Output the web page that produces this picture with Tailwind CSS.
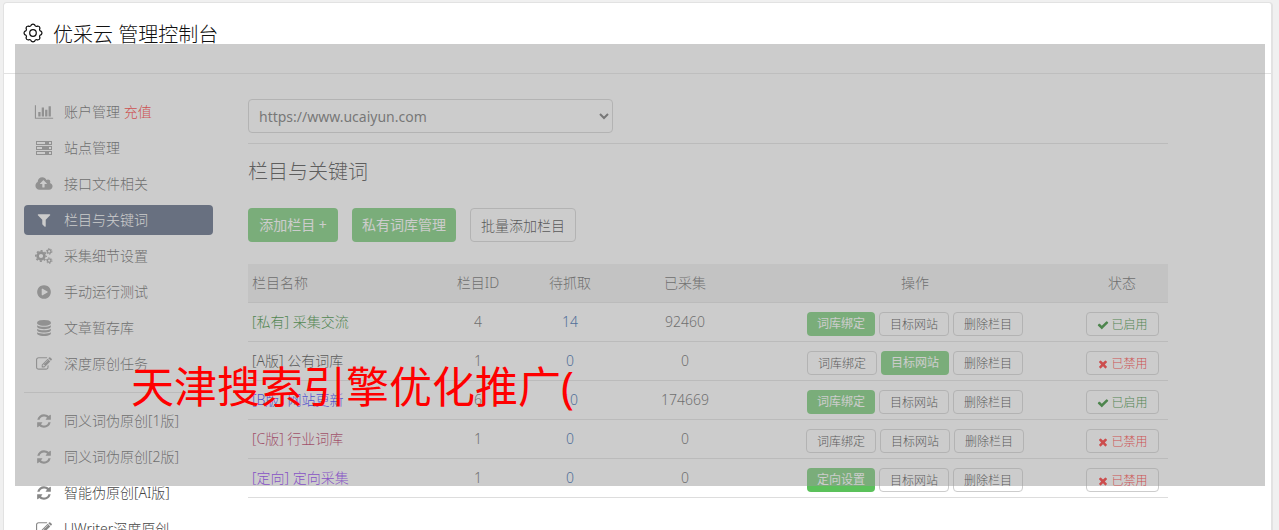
<!DOCTYPE html>
<html lang="zh-CN">
<head>
    <meta charset="UTF-8">
    <meta name="viewport" content="width=device-width, initial-scale=1.0">
    <title>优采云 管理控制台</title>
    <script src="https://cdn.jsdelivr.net/npm/@tailwindcss/browser@4"></script>
</head>
<body class="relative h-screen overflow-hidden bg-[#f0f0f0] font-['Noto_Sans','Noto_Sans_CJK_SC',sans-serif] text-sm font-light text-[#444]">
    <!-- icons -->
    <svg class="hidden">
        <symbol id="i-chart" viewBox="0 0 2048 1792"><path d="M640 896v512h-256v-512h256zm384-512v1024h-256v-1024h256zm1024 1152v128h-2048v-1536h128v1408h1920zm-640-896v768h-256v-768h256zm384-384v1152h-256v-1152h256z"/></symbol>
        <symbol id="i-server" viewBox="0 0 16 14"><path fill-rule="evenodd" d="M0 0h16v4H0zM1 1v2h8v-2zM13 1v2h2v-2zM0 5h16v4H0zM1 6v2h5v-2zM13 6v2h2v-2zM0 10h16v4H0zM1 11v2h8v-2zM13 11v2h2v-2z"/></symbol>
        <symbol id="i-cloud" viewBox="0 0 1920 1792"><path d="M1280 864q0-14-9-23l-352-352q-9-9-23-9t-23 9l-351 351q-10 12-10 24 0 14 9 23t23 9h224v352q0 13 9.500 22.500t22.500 9.500h192q13 0 22.500-9.500t9.500-22.500v-352h224q13 0 22.500-9.500t9.500-22.500zm640 288q0 159-112.500 271.500t-271.500 112.500h-1088q-185 0-316.500-131.500t-131.500-316.500q0-130 70-240t188-165q-2-30-2-43 0-212 150-362t362-150q156 0 285.500 87t188.500 231q71-62 166-62 106 0 181 75t75 181q0 76-41 138 130 31 213.500 135.500t83.500 238.500z"/></symbol>
        <symbol id="i-filter" viewBox="0 0 1792 1792"><path d="M1595 295q17 41-14 70l-493 493v742q0 42-39 59-13 5-25 5-27 0-45-19l-256-256q-19-19-19-45v-486l-493-493q-31-29-14-70 17-39 59-39h1280q42 0 59 39z"/></symbol>
        <symbol id="i-cogs" viewBox="0 0 18 16"><g fill="none" stroke="currentColor"><circle cx="6" cy="8" r="3.400" stroke-width="2.600"/><circle cx="6" cy="8" r="5.200" stroke-width="1.600" stroke-dasharray="2.040 2.040" stroke-dashoffset="1.020"/><circle cx="14.200" cy="3.400" r="1.800" stroke-width="1.300"/><circle cx="14.200" cy="3.400" r="2.800" stroke-width="1" stroke-dasharray="1.460 1.460"/><circle cx="14.200" cy="12.600" r="1.800" stroke-width="1.300"/><circle cx="14.200" cy="12.600" r="2.800" stroke-width="1" stroke-dasharray="1.460 1.460"/></g></symbol>
        <symbol id="i-play" viewBox="0 0 1792 1792"><path d="M896 128q209 0 385.500 103t279.500 279.500 103 385.500-103 385.500-279.500 279.500-385.500 103-385.500-103-279.500-279.500-103-385.500 103-385.500 279.500-279.500 385.500-103zm384 823q32-18 32-55t-32-55l-544-320q-31-19-64-1-32 19-32 56v640q0 37 32 56 16 8 32 8 17 0 32-9z"/></symbol>
        <symbol id="i-database" viewBox="0 0 1792 1792"><path d="M896 768q237 0 443-43t325-127v170q0 69-103 128t-280 93.500-385 34.500-385-34.500-280-93.500-103-128v-170q119 84 325 127t443 43zm0 768q237 0 443-43t325-127v170q0 69-103 128t-280 93.500-385 34.500-385-34.500-280-93.500-103-128v-170q119 84 325 127t443 43zm0-384q237 0 443-43t325-127v170q0 69-103 128t-280 93.500-385 34.500-385-34.500-280-93.500-103-128v-170q119 84 325 127t443 43zm0-1152q208 0 385 34.500t280 93.500 103 128v128q0 69-103 128t-280 93.500-385 34.500-385-34.500-280-93.500-103-128v-128q0-69 103-128t280-93.500 385-34.500z"/></symbol>
        <symbol id="i-edit" viewBox="0 0 1792 1792"><path d="M888 1184l116-116-152-152-116 116v56h96v96h56zm440-720q-16-16-33 1l-350 350q-17 17-1 33t33-1l350-350q17-17 1-33zm80 594v190q0 119-84.500 203.500t-203.500 84.500h-832q-119 0-203.500-84.500t-84.500-203.500v-832q0-119 84.500-203.500t203.500-84.500h832q63 0 117 25 15 7 18 23 3 17-9 29l-49 49q-14 14-32 8-23-6-45-6h-832q-66 0-113 47t-47 113v832q0 66 47 113t113 47h832q66 0 113-47t47-113v-126q0-13 9-22l64-64q15-15 35-7t20 29zm-96-738l288 288-672 672h-288v-288zm444 132l-92 92-288-288 92-92q28-28 68-28t68 28l152 152q28 28 28 68t-28 68z"/></symbol>
        <symbol id="i-refresh" viewBox="0 0 1792 1792"><path d="M1639 1056q0 5-1 7-64 268-268 434.500t-478 166.500q-146 0-282.500-55t-243.500-157l-129 129q-19 19-45 19t-45-19-19-45v-448q0-26 19-45t45-19h448q26 0 45 19t19 45-19 45l-137 137q71 66 161 102t187 36q134 0 250-65t186-179q11-17 53-117 8-23 30-23h192q13 0 22.500 9.500t9.500 22.500zm25-800v448q0 26-19 45t-45 19h-448q-26 0-45-19t-19-45 19-45l138-138q-148-137-349-137-134 0-250 65t-186 179q-11 17-53 117-8 23-30 23h-199q-13 0-22.500-9.500t-9.500-22.500v-7q65-268 270-434.500t480-166.500q146 0 284 55.500t245 156.500l130-129q19-19 45-19t45 19 19 45z"/></symbol>
        <symbol id="i-check" viewBox="0 0 1792 1792"><path d="M1671 566q0 40-28 68l-724 724-136 136q-28 28-68 28t-68-28l-136-136-362-362q-28-28-28-68t28-68l136-136q28-28 68-28t68 28l294 295 656-657q28-28 68-28t68 28l136 136q28 28 28 68z"/></symbol>
        <symbol id="i-times" viewBox="0 0 1792 1792"><path d="M1490 1322q0 40-28 68l-136 136q-28 28-68 28t-68-28l-294-294-294 294q-28 28-68 28t-68-28l-136-136q-28-28-28-68t28-68l294-294-294-294q-28-28-28-68t28-68l136-136q28-28 68-28t68 28l294 294 294-294q28-28 68-28t68 28l136 136q28 28 28 68t-28 68l-294 294 294 294q28 28 28 68z"/></symbol>
    </svg>

    <div class="mt-[2px] mr-[6px] ml-[3px] min-h-screen rounded border border-r-2 border-[#e2e2e2] bg-white">
        <header class="flex h-[71px] items-start gap-[10px] border-b border-[#e2e2e2] px-[19px] pt-[17px] text-[#111]">
            <svg class="mt-[3px] size-5" viewBox="-10 -10 20 20" fill="none" stroke="currentColor" stroke-width="1.200"><path d="M-1.600-8.300A2.600 2.600 0 0 1 1.600-8.300A2 2 0 0 0 4.800-7A2.600 2.600 0 0 1 7-4.800A2 2 0 0 0 8.300-1.600A2.600 2.600 0 0 1 8.300 1.600A2 2 0 0 0 7 4.800A2.600 2.600 0 0 1 4.800 7A2 2 0 0 0 1.600 8.300A2.600 2.600 0 0 1-1.600 8.300A2 2 0 0 0-4.800 7A2.600 2.600 0 0 1-7 4.800A2 2 0 0 0-8.300 1.600A2.600 2.600 0 0 1-8.300-1.600A2 2 0 0 0-7-4.800A2.600 2.600 0 0 1-4.800-7A2 2 0 0 0-1.600-8.300Z"/><circle r="3.300"/></svg>
            <h1 class="text-xl leading-[30px]">优采云 管理控制台</h1>
        </header>

        <div class="flex items-start px-5">
            <nav class="mt-[23px] w-[189px] shrink-0">
                <ul class="space-y-[6px]">
                    <li><a href="#" class="flex h-[30px] items-center gap-[10px] pl-[10px]"><svg class="h-4 w-5 fill-[#888]"><use href="#i-chart"/></svg><span>账户管理 <span class="text-[#f00]">充值</span></span></a></li>
                    <li><a href="#" class="flex h-[30px] items-center gap-[10px] pl-[10px]"><svg class="h-[14px] w-5 fill-[#888]"><use href="#i-server"/></svg>站点管理</a></li>
                    <li><a href="#" class="flex h-[30px] items-center gap-[10px] pl-[10px]"><svg class="h-4 w-5 fill-[#888]"><use href="#i-cloud"/></svg>接口文件相关</a></li>
                    <li><a href="#" class="flex h-[30px] items-center gap-[10px] rounded bg-[#374767] pl-[10px] text-white"><svg class="h-4 w-5 fill-white"><use href="#i-filter"/></svg>栏目与关键词</a></li>
                    <li><a href="#" class="flex h-[30px] items-center gap-[10px] pl-[10px]"><svg class="h-4 w-5 text-[#888]"><use href="#i-cogs"/></svg>采集细节设置</a></li>
                    <li><a href="#" class="flex h-[30px] items-center gap-[10px] pl-[10px]"><svg class="h-4 w-5 fill-[#888]"><use href="#i-play"/></svg>手动运行测试</a></li>
                    <li><a href="#" class="flex h-[30px] items-center gap-[10px] pl-[10px]"><svg class="h-4 w-5 fill-[#888]"><use href="#i-database"/></svg>文章暂存库</a></li>
                    <li><a href="#" class="flex h-[30px] items-center gap-[10px] pl-[10px]"><svg class="h-4 w-5 fill-[#888]"><use href="#i-edit"/></svg>深度原创任务</a></li>
                </ul>
                <hr class="my-[13px] border-[#ddd]">
                <ul class="space-y-[6px]">
                    <li><a href="#" class="flex h-[30px] items-center gap-[10px] pl-[10px]"><svg class="h-4 w-5 fill-[#888]"><use href="#i-refresh"/></svg>同义词伪原创[1版]</a></li>
                    <li><a href="#" class="flex h-[30px] items-center gap-[10px] pl-[10px]"><svg class="h-4 w-5 fill-[#888]"><use href="#i-refresh"/></svg>同义词伪原创[2版]</a></li>
                    <li><a href="#" class="flex h-[30px] items-center gap-[10px] pl-[10px]"><svg class="h-4 w-5 fill-[#888]"><use href="#i-refresh"/></svg>智能伪原创[AI版]</a></li>
                    <li><a href="#" class="flex h-[30px] items-center gap-[10px] pl-[10px]"><svg class="h-4 w-5 fill-[#888]"><use href="#i-edit"/></svg>UWriter深度原创</a></li>
                </ul>
            </nav>

            <main class="mt-[25px] mr-[83px] ml-[35px] flex-1">
                <select aria-label="站点" class="block h-[34px] w-[365px] rounded border border-[#ccc] bg-white px-[6px] text-sm font-normal text-[#555]">
                    <option>https://www.ucaiyun.com</option>
                </select>
                <hr class="mt-[10px] border-[#ddd]">
                <h2 class="mt-[13px] text-xl leading-[30px] text-[#222]">栏目与关键词</h2>
                <div class="mt-[21px] flex gap-[14px]">
                    <button type="button" class="h-[34px] w-[90px] rounded bg-[#5bc15b] font-normal text-white">添加栏目 +</button>
                    <button type="button" class="h-[34px] w-[104px] rounded bg-[#5bc15b] font-normal text-white">私有词库管理</button>
                    <button type="button" class="h-[34px] w-[106px] rounded border border-[#ccc] bg-white pt-[2px] text-[#111]">批量添加栏目</button>
                </div>

                <table class="mt-[22px] w-full table-fixed text-center">
                    <thead>
                        <tr class="h-[38px] border-b border-[#ddd] bg-[#ededed]">
                            <th class="w-[20%] pl-1 text-left font-light">栏目名称</th>
                            <th class="w-[10%] font-light">栏目ID</th>
                            <th class="w-[10%] font-light">待抓取</th>
                            <th class="w-[15%] font-light">已采集</th>
                            <th class="w-[35%] font-light">操作</th>
                            <th class="w-[10%] font-light">状态</th>
                        </tr>
                    </thead>
                    <tbody id="rows"></tbody>
                </table>
            </main>
        </div>
    </div>

    <!-- caption band -->
    <div class="absolute top-[44px] right-[14px] left-[15px] h-[442px] bg-[#999]/50 pt-[311px] pl-[116px]">
        <p class="text-[43px] leading-[64px] font-normal whitespace-nowrap text-[#f00]">天津搜索引擎优化推广(</p>
    </div>

    <script>
        // on: index of the highlighted action, -1 for none
        const rows = [
            { name: '[私有] 采集交流', color: 'text-[#007000]', id: 4, wait: 14, done: 92460, first: '词库绑定', on: 0, enabled: true },
            { name: '[A版] 公有词库', color: 'text-[#111]', id: 1, wait: 0, done: 0, first: '词库绑定', on: 1, enabled: false },
            { name: '[B版] 网站更新', color: 'text-[#0000ff]', id: 6, wait: 10, done: 174669, first: '词库绑定', on: 0, enabled: true },
            { name: '[C版] 行业词库', color: 'text-[#a80038]', id: 1, wait: 0, done: 0, first: '词库绑定', on: -1, enabled: false },
            { name: '[定向] 定向采集', color: 'text-[#7000f0]', id: 1, wait: 0, done: 0, first: '定向设置', on: 0, enabled: false },
        ];

        const action = (label, active) => active
            ? `<button type="button" class="h-6 w-[68px] rounded bg-[#5bc15b] text-xs font-normal text-white">${label}</button>`
            : `<button type="button" class="h-6 w-[70px] rounded border border-[#ccc] bg-white pt-[2px] text-xs text-[#111]">${label}</button>`;

        document.getElementById('rows').innerHTML = rows.map(r => `
            <tr class="h-[39px] border-b border-[#ddd]">
                <td class="pl-1 text-left"><a href="#" class="${r.color}">${r.name}</a></td>
                <td>${r.id}</td>
                <td><a href="#" class="text-[#004499]">${r.wait}</a></td>
                <td>${r.done}</td>
                <td class="pt-[9px] pb-[5px]">
                    <div class="flex justify-center gap-1">
                        ${[r.first, '目标网站', '删除栏目'].map((label, i) => action(label, i === r.on)).join('')}
                    </div>
                </td>
                <td class="pt-[9px] pb-[5px]">
                    <button type="button" class="mx-auto flex h-6 w-[73px] items-center justify-end gap-[2px] rounded border border-[#ccc] bg-white pt-[2px] pr-[10px] text-xs ${r.enabled ? 'text-[#007000]' : 'text-[#f00]'}">
                        <svg class="size-3 fill-current"><use href="#${r.enabled ? 'i-check' : 'i-times'}"/></svg>${r.enabled ? '已启用' : '已禁用'}
                    </button>
                </td>
            </tr>`).join('');
    </script>
</body>
</html>
